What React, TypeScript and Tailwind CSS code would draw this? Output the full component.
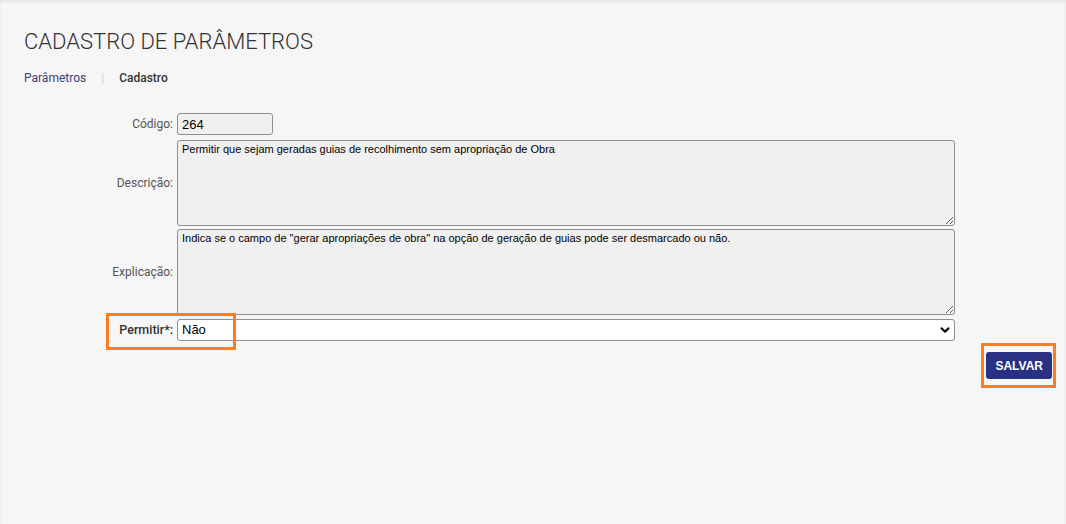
import { ChevronDown } from "lucide-react";

const labelCls = "text-right text-[12px] text-[#555] font-['Roboto',sans-serif] pr-[2px]";
const areaCls =
  "block w-full h-[86px] resize-y rounded-[3px] border border-[#8f8f8f] bg-[#f0f0f0] px-[4px] pt-[1px] text-[11px] leading-[14px] text-black font-['Liberation_Sans',Arial,sans-serif]";

export default function App() {
  return (
    <div className="min-h-[524px] w-full bg-[#f6f6f6] shadow-[inset_0_2px_3px_rgba(0,0,0,0.07)] pl-6 pr-[14px] pt-[28px] font-['Roboto',sans-serif]">
      <h1 className="text-[22px] font-light leading-[28px] text-[#333]">CADASTRO DE PARÂMETROS</h1>

      <nav className="mt-[14px] flex items-center text-[12px] leading-[16px]">
        <span className="text-[#3d3d7a]">Parâmetros</span>
        <span className="mx-[15px] text-[#d0d0d0]">|</span>
        <span className="font-medium text-[#333]">Cadastro</span>
      </nav>

      <form className="mt-[27px] grid grid-cols-[151px_778px] items-center gap-x-[2px]">
        <label className={labelCls}>Código:</label>
        <input
          disabled
          value="264"
          readOnly
          className="block h-[22px] w-[96px] rounded-[3px] border border-[#8f8f8f] bg-[#f0f0f0] px-[4px] text-[13px] text-black font-['Liberation_Sans',Arial,sans-serif]"
        />

        <label className={`${labelCls} mt-[5px]`}>Descrição:</label>
        <textarea
          readOnly
          className={`${areaCls} mt-[5px]`}
          defaultValue="Permitir que sejam geradas guias de recolhimento sem apropriação de Obra"
        />

        <label className={`${labelCls} mt-[3px]`}>Explicação:</label>
        <textarea
          readOnly
          className={`${areaCls} mt-[3px]`}
          defaultValue={'Indica se o campo de "gerar apropriações de obra" na opção de geração de guias pode ser desmarcado ou não.'}
        />

        <label className="mt-[4px] text-right text-[12.5px] font-medium text-[#333] pr-[2px]">Permitir*:</label>
        <div className="relative mt-[4px] h-[22px]">
          <select className="block h-[22px] w-full appearance-none rounded-[3px] border border-[#8f8f8f] bg-white px-[4px] text-[13px] text-black font-['Liberation_Sans',Arial,sans-serif]">
            <option>Não</option>
            <option>Sim</option>
          </select>
          <ChevronDown className="pointer-events-none absolute right-[3px] top-[4px] h-[14px] w-[14px] text-black" strokeWidth={3.5} />
          <span className="pointer-events-none absolute left-[-71px] top-[-6px] h-[37px] w-[130px] border-[3px] border-[#fa7d24]" />
        </div>
      </form>

      <div className="mt-[11px] flex justify-end">
        <div className="relative">
          <button
            type="button"
            className="block h-[27px] rounded-[3px] bg-[#2b3182] px-[9px] text-[12px] font-bold text-white font-['Liberation_Sans',Arial,sans-serif]"
          >
            SALVAR
          </button>
          <span className="pointer-events-none absolute -left-[5px] -right-[4px] -top-[9px] -bottom-[9px] border-[3px] border-[#fa7d24]" />
        </div>
      </div>
    </div>
  );
}
